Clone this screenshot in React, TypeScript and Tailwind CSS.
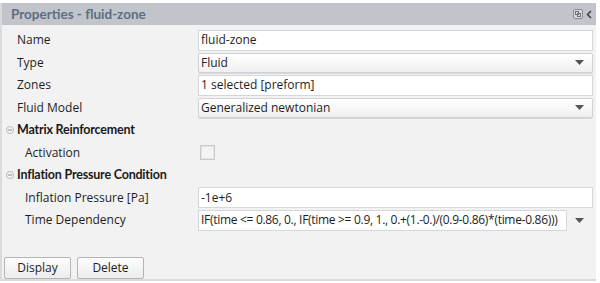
import React from "react";

const font = { fontFamily: '"Open Sans", "Noto Sans", sans-serif' };
const boldFont = { fontFamily: 'Lato, "Open Sans", sans-serif' };

function Arrow() {
  return (
    <svg width="9" height="5" viewBox="0 0 9 5" className="shrink-0">
      <path d="M0 0 H9 L4.5 5 Z" fill="#555" />
    </svg>
  );
}

function Minus() {
  return (
    <svg width="8" height="8" viewBox="0 0 8 8" className="shrink-0">
      <circle cx="4" cy="4" r="3.5" fill="#f7f7f7" stroke="#b8b8b8" strokeWidth="1" />
      <path d="M2 4 H6" stroke="#888" strokeWidth="1" />
    </svg>
  );
}

function Row({ label, indent, children }: { label: string; indent?: boolean; children?: React.ReactNode }) {
  return (
    <div className="flex h-[22.5px] items-center">
      <div className={`w-[196px] shrink-0 text-[12px] text-[#1e1e1e] ${indent ? "pl-[23px]" : "pl-[15px]"}`}>{label}</div>
      <div className="flex h-full flex-1 items-center pr-[3px]">{children}</div>
    </div>
  );
}

function Input({ value }: { value: string }) {
  return (
    <div className="flex h-[21px] w-full items-center border border-[#d3d6db] bg-white pl-[2px] text-[12px] text-[#1e1e1e]">
      {value}
    </div>
  );
}

function Select({ value }: { value: string }) {
  return (
    <div className="flex h-[20px] w-full items-center justify-between rounded-[2px] border border-[#cfd2d6] bg-gradient-to-b from-white to-[#f0f0f0] pl-[2px] pr-[8px] text-[12px] text-[#1e1e1e] shadow-[0_1px_0_#d8d8d8]">
      <span>{value}</span>
      <Arrow />
    </div>
  );
}

function Section({ label }: { label: string }) {
  return (
    <div className="flex h-[22.5px] items-center pl-[4px]">
      <Minus />
      <span className="pl-[3px] text-[12.5px] font-bold tracking-[-0.2px] text-[#1a1a1a]" style={boldFont}>{label}</span>
    </div>
  );
}

function Button({ label, w }: { label: string; w: string }) {
  return (
    <div className={`flex h-[22px] ${w} items-center justify-center rounded-[2px] border border-[#b4b4b4] bg-gradient-to-b from-[#fdfdfd] to-[#ececec] text-[12px] text-[#1e1e1e]`}>
      {label}
    </div>
  );
}

export default function App() {
  return (
    <div className="h-[283px] w-[600px] bg-white pt-[3px]" style={font}>
      <div className="flex h-[278px] w-[596px] flex-col border-b-2 border-l-2 border-[#d9dbde] bg-[#f2f2f2]">
        <div className="flex h-[22px] shrink-0 items-center justify-between bg-[#c1c5cb] pl-[9px] pr-[4px]">
          <span className="text-[13.5px] font-bold text-[#5e6d80]" style={boldFont}>Properties - fluid-zone</span>
          <div className="flex items-center gap-[3px]">
            <svg width="10" height="10" viewBox="0 0 10 10">
              <rect x="0.5" y="0.5" width="9" height="9" rx="1.5" fill="#d6d8db" stroke="#8a8d91" />
              <rect x="2.5" y="2.5" width="3" height="3" fill="none" stroke="#6f7277" />
              <rect x="4.5" y="4.5" width="3" height="3" fill="none" stroke="#6f7277" />
            </svg>
            <svg width="6" height="9" viewBox="0 0 6 9">
              <path d="M5 1 L1.5 4.5 L5 8" fill="none" stroke="#333" strokeWidth="1.4" />
            </svg>
          </div>
        </div>
        <div className="flex flex-col pt-[4px]">
          <Row label="Name"><Input value="fluid-zone" /></Row>
          <Row label="Type"><Select value="Fluid" /></Row>
          <Row label="Zones"><Input value="1 selected [preform]" /></Row>
          <Row label="Fluid Model"><Select value="Generalized newtonian" /></Row>
          <Section label="Matrix Reinforcement" />
          <Row label="Activation" indent>
            <div className="ml-[2px] h-[15px] w-[15px] border border-[#c9c9c9] bg-[#f4f4f4] shadow-[inset_0_0_0_1px_#e4e4e4]" />
          </Row>
          <Section label="Inflation Pressure Condition" />
          <Row label="Inflation Pressure [Pa]" indent><Input value="-1e+6" /></Row>
          <Row label="Time Dependency" indent>
            <div className="flex w-full items-center">
              <div className="flex h-[21px] w-[369px] items-center overflow-hidden border border-[#d3d6db] bg-white pl-[2px] text-[12px] tracking-[-0.3px] text-[#1e1e1e] whitespace-nowrap">
                IF(time &lt;= 0.86, 0., IF(time &gt;= 0.9, 1., 0.+(1.-0.)/(0.9-0.86)*(time-0.86)))
              </div>
              <div className="pl-[8px]"><Arrow /></div>
            </div>
          </Row>
        </div>
        <div className="flex-1" />
        <div className="flex gap-[6px] pl-[2px]">
          <Button label="Display" w="w-[67px]" />
          <Button label="Delete" w="w-[67px]" />
        </div>
      </div>
    </div>
  );
}
